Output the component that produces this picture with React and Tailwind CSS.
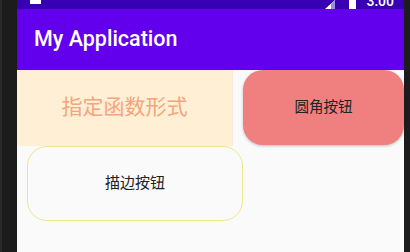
export default function App() {
  return (
    <div className="flex h-[252px] w-[410px] overflow-hidden bg-[#1a1a1a]" style={{ fontFamily: 'Roboto, "Noto Sans CJK SC", sans-serif' }}>
      <div className="w-[17px] shrink-0 bg-[#1c1c1c] border-l-[2px] border-[#2a2a2a]" />
      <div className="flex w-[387px] shrink-0 flex-col bg-[#fafafa]">
        <div className="flex h-[9px] shrink-0 items-end overflow-hidden bg-[#3700b3] pl-[13px] pr-[10px]">
          <div className="h-[4px] w-[11px] self-start bg-white" />
          <div className="flex-1" />
          <svg width="10" height="9" viewBox="0 0 10 9" className="self-end">
            <polygon points="10,0 10,9 0,9" fill="#ffffff" />
            <polygon points="10,0 10,9 6,9 6,4" fill="#9b8ee0" />
          </svg>
          <div className="ml-[14px] h-[9px] w-[7px] bg-white" />
          <div className="ml-[10px] h-[9px] flex items-end overflow-hidden">
            <span className="text-[14px] leading-[14px] font-medium text-white translate-y-[-1px]">3:00</span>
          </div>
        </div>
        <div className="flex h-[61px] shrink-0 items-center bg-[#6200ee] pl-[17px] pb-[1px]">
          <span className="text-[21.5px] font-medium text-white">My Application</span>
        </div>
        <div className="flex flex-col">
          <div className="flex items-start">
            <div className="flex h-[76px] w-[216px] items-center justify-center bg-[#ffefd5] border-r border-[#f7ead8]">
              <span className="text-[21px] text-[#f5a47c]">指定函数形式</span>
            </div>
            <div className="ml-[10px] flex h-[75px] w-[161px] items-center justify-center rounded-[20px] bg-[#f08080] shadow-[0_1px_3px_rgba(0,0,0,0.25)]">
              <span className="text-[14.5px] text-[#222]">圆角按钮</span>
            </div>
          </div>
          <div className="ml-[10px] flex h-[75px] w-[216px] items-center justify-center rounded-[20px] border-[1.5px] border-[#f0e68c] bg-[#fafafa]">
            <span className="text-[15px] text-[#222]">描边按钮</span>
          </div>
        </div>
      </div>
      <div className="w-[6px] shrink-0 bg-[#1c1c1c]" />
    </div>
  );
}
